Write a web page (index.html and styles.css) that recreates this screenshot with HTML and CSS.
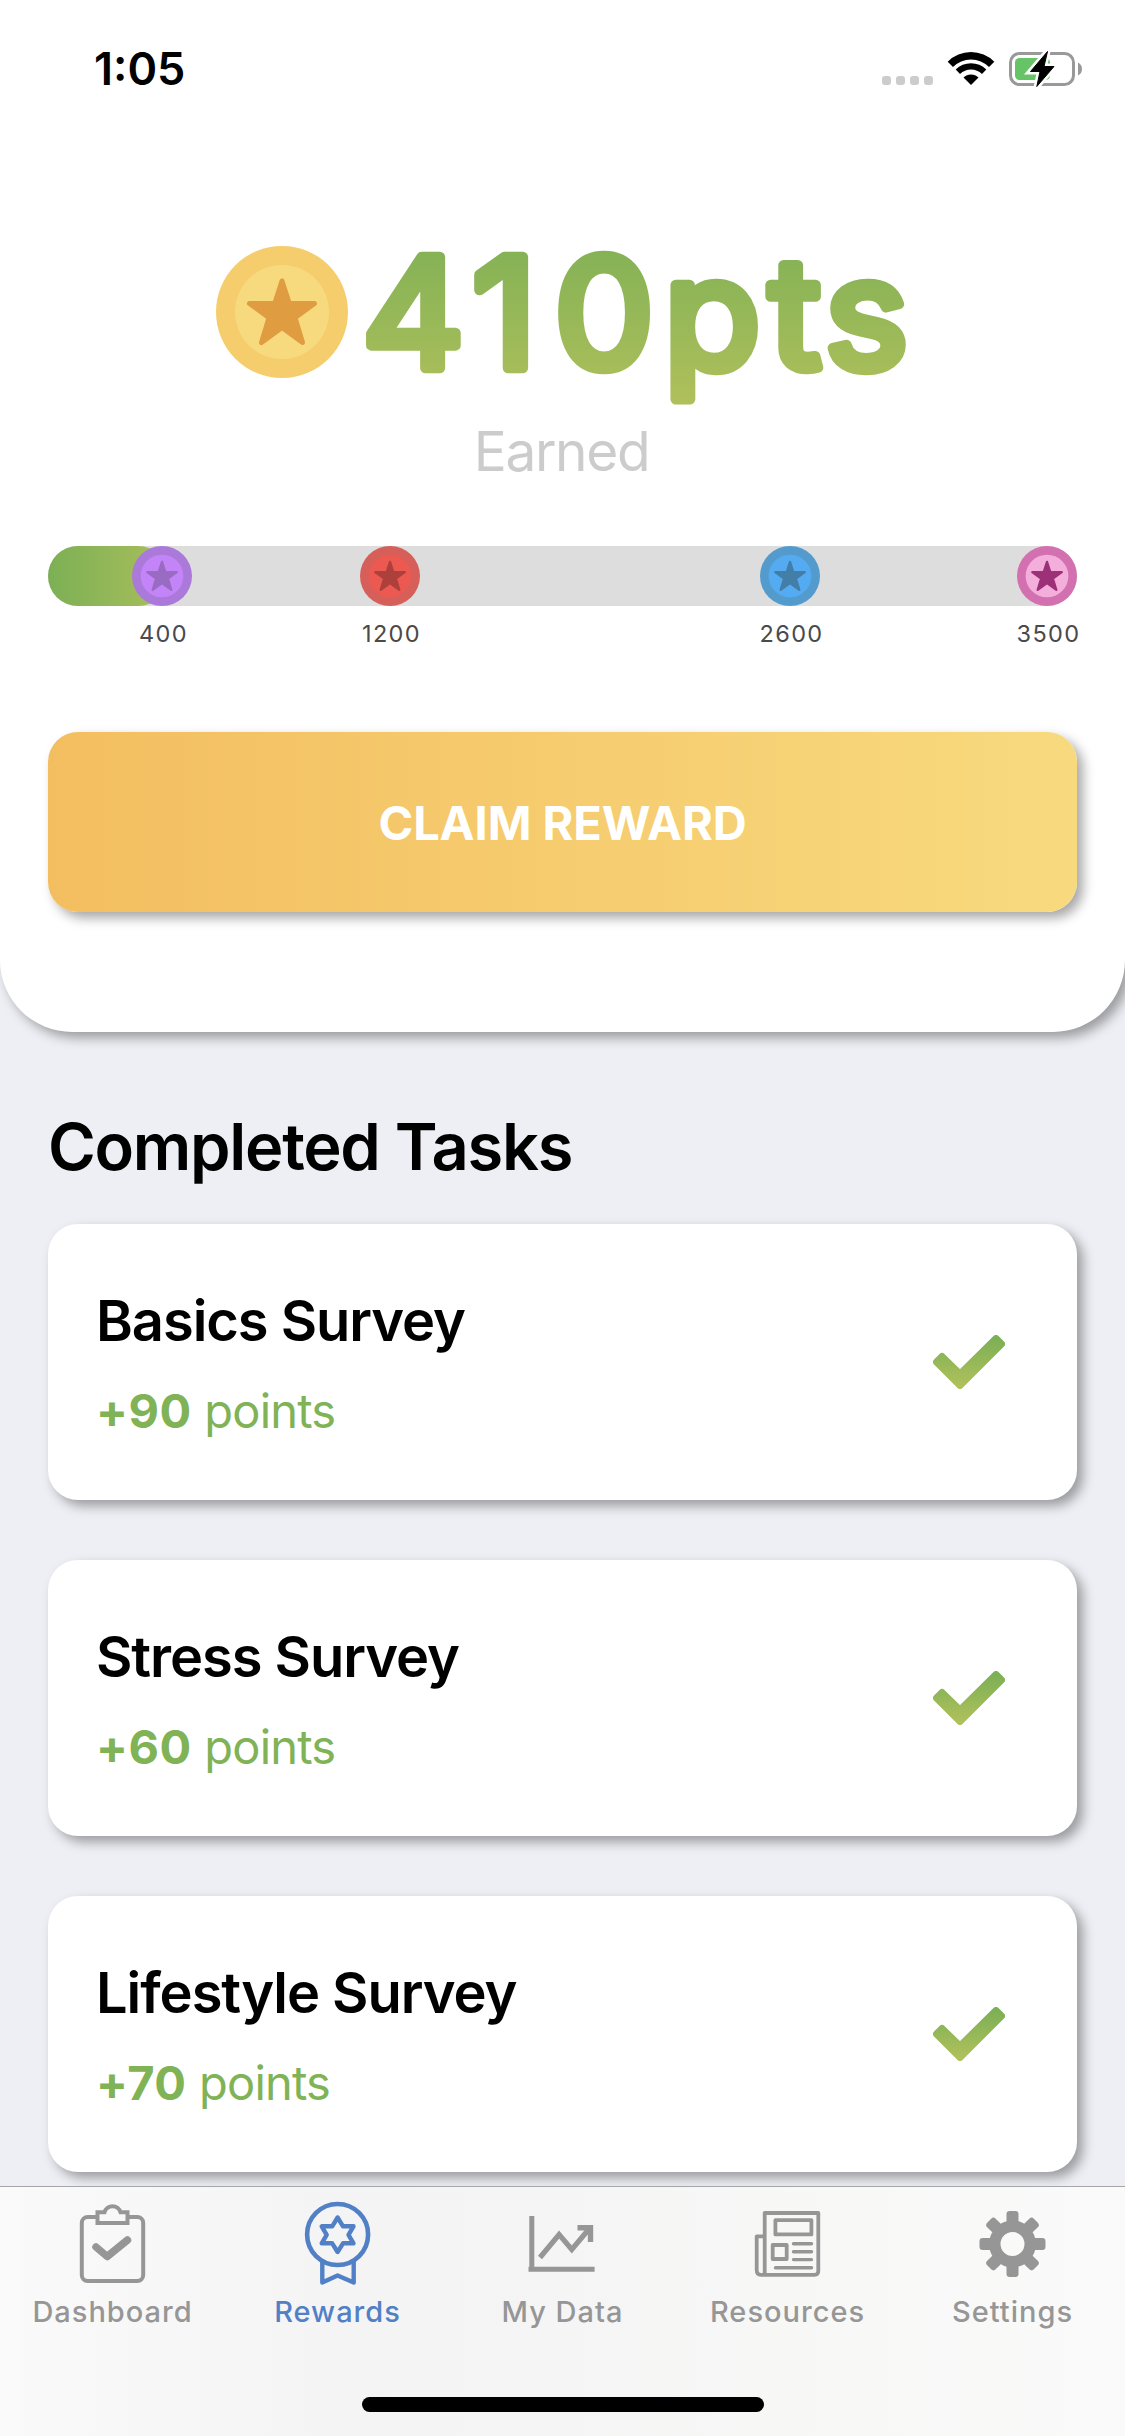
FILE: index.html
```html
<!DOCTYPE html>
<html lang="en">
<head>
<meta charset="utf-8">
<title>Rewards</title>
<link rel="stylesheet" href="styles.css">
</head>
<body>
<svg class="defs" width="0" height="0" aria-hidden="true">
  <defs>
    <linearGradient id="leaf" x1="0" y1="0" x2="0" y2="1">
      <stop offset="0" stop-color="#7cb055"/>
      <stop offset="1" stop-color="#afc05b"/>
    </linearGradient>
    <linearGradient id="leafText" gradientUnits="userSpaceOnUse" x1="0" y1="-5" x2="0" y2="158">
      <stop offset="0" stop-color="#82b155"/>
      <stop offset="1" stop-color="#afc05b"/>
    </linearGradient>
    <symbol id="coin" viewBox="0 0 132 132">
      <circle class="coin-rim" cx="66" cy="66" r="66"/>
      <circle class="coin-face" cx="66" cy="66" r="47"/>
      <path class="coin-star" d="M66 35 L73.3 57.5 H98.500 L79 71.700 L86.500 96.500 L66 81.500 L45.500 96.500 L53 71.700 L33.500 57.500 H58.700 Z"/>
    </symbol>
    <symbol id="check" viewBox="0 0 72 54">
      <path d="M9 21.500 L27 39 L63 3.500 L68.500 9 L27 50.500 L3.500 27 Z" fill="url(#leaf)" stroke="url(#leaf)" stroke-width="7" stroke-linejoin="round"/>
    </symbol>
  </defs>
</svg>

<div class="screen">
  <header class="summary">
    <div class="status">
      <span class="time">1:05</span>
      <svg class="status-icons" viewBox="0 0 210 46">
        <g fill="#ccc">
          <rect x="6" y="30" width="9" height="9" rx="3"/>
          <rect x="20" y="30" width="9" height="9" rx="3"/>
          <rect x="34" y="30" width="9" height="9" rx="3"/>
          <rect x="48" y="30" width="9" height="9" rx="3"/>
        </g>
        <g>
          <path d="M71.700 15.700 A33 33 0 0 1 118.300 15.700 L113 21 A25.500 25.500 0 0 0 77 21 Z"/>
          <path d="M79.700 23.500 A21.800 21.800 0 0 1 110.300 23.500 L106 28 A15.600 15.600 0 0 0 84 28 Z"/>
          <path d="M87.500 31.500 A10.600 10.600 0 0 1 102.500 31.500 L95 39 Z"/>
        </g>
        <rect x="134.500" y="7.500" width="63" height="31" rx="9" fill="none" stroke="#999" stroke-width="3"/>
        <path d="M202 16.500 Q206 18.500 206 23 Q206 27.500 202 29.500 Z" fill="#999"/>
        <rect x="139" y="12" width="35" height="22" rx="4.500" fill="#67c466"/>
        <path d="M171.500 5.500 L154.500 25.500 H164 L160.800 40.500 L178 20.500 H168 Z" stroke="#fff" stroke-width="6" fill="#fff"/>
        <path d="M171.500 5.500 L154.500 25.500 H164 L160.800 40.500 L178 20.500 H168 Z" stroke="#000" stroke-width="1" stroke-linejoin="round"/>
      </svg>
    </div>

    <div class="score">
      <svg class="score-coin coin-gold"><use href="#coin"/></svg>
      <svg class="score-value" viewBox="0 0 545 132">
        <text transform="scale(1.04 1)" x="1" y="121.500" dx="1.200 -1.500 4.800 -2.800 -3.500 -7" textLength="525" lengthAdjust="spacing">410pts</text>
      </svg>
    </div>
    <p class="score-caption">Earned</p>

    <div class="track">
      <div class="track-fill" style="width: 120px"></div>
      <div class="milestone" style="left: 114px"><svg class="coin-purple"><use href="#coin"/></svg><span>400</span></div>
      <div class="milestone" style="left: 342px"><svg class="coin-red"><use href="#coin"/></svg><span>1200</span></div>
      <div class="milestone" style="left: 742px"><svg class="coin-blue"><use href="#coin"/></svg><span>2600</span></div>
      <div class="milestone" style="left: 999px"><svg class="coin-pink"><use href="#coin"/></svg><span>3500</span></div>
    </div>

    <button class="claim">CLAIM REWARD</button>
  </header>

  <main class="tasks">
    <h1>Completed Tasks</h1>
    <article class="task">
      <div><h2>Basics Survey</h2><p><b>+90</b> points</p></div>
      <svg class="check"><use href="#check"/></svg>
    </article>
    <article class="task">
      <div><h2>Stress Survey</h2><p><b>+60</b> points</p></div>
      <svg class="check"><use href="#check"/></svg>
    </article>
    <article class="task">
      <div><h2>Lifestyle Survey</h2><p><b>+70</b> points</p></div>
      <svg class="check"><use href="#check"/></svg>
    </article>
  </main>

  <nav class="tabs">
    <a class="tab">
      <svg viewBox="0 0 90 96">
        <rect x="13.800" y="20" width="61.400" height="64" rx="6" stroke-width="4"/>
        <path d="M29.500 15.300 H36.500 A8.300 8.300 0 0 1 52.500 15.300 H59.500 V26 H29.500 Z" fill="#f8f8f8" stroke-width="4"/>
        <path d="M28 50 L39.200 59.500 L59.500 43" stroke-width="7.500" stroke-linecap="round" stroke-linejoin="round"/>
      </svg>
      <span>Dashboard</span>
    </a>
    <a class="tab active">
      <svg viewBox="0 0 90 96">
        <circle cx="44.600" cy="37.500" r="30.500" stroke-width="4.600"/>
        <path d="M44.600 20.500 L50 29.300 H60.500 L55.500 37.800 L60.500 46.300 H50 L44.600 55 L39.200 46.300 H28.700 L33.700 37.800 L28.700 29.300 H39.200 Z" stroke-width="4.400" stroke-linejoin="round"/>
        <path d="M29.300 64 V85.500 L44.600 78.500 L60.700 85.500 V64" stroke-width="4.400" stroke-linejoin="round"/>
      </svg>
      <span>Rewards</span>
    </a>
    <a class="tab">
      <svg viewBox="0 0 90 96">
        <path d="M13.800 19 V72.300 M10.500 72.300 H76.600" stroke-width="5"/>
        <path d="M22 60.500 L41.100 37.500 L53.800 52.500 L71 32" stroke-width="5.200"/>
        <path d="M59.500 30.700 H72.500 V45" stroke-width="5.400"/>
      </svg>
      <span>My Data</span>
    </a>
    <a class="tab">
      <svg viewBox="0 0 90 96">
        <g stroke-width="3.800" stroke-linejoin="round" stroke-linecap="round">
          <path d="M21.700 16 H75.300 V74 Q75.300 77.800 71.500 77.800 H18 Q13.700 77.800 13.700 73 V39.300 H21.700 M21.700 16 V77"/>
          <rect x="32.400" y="23.200" width="36" height="14.200"/>
          <rect x="29.700" y="48" width="14" height="14"/>
          <path stroke-width="3.400" d="M50.500 46.700 H68.500 M50.500 54.700 H68.500 M50.500 62.600 H68.500 M32.500 70.800 H68.500"/>
        </g>
      </svg>
      <span>Resources</span>
    </a>
    <a class="tab">
      <svg viewBox="0 0 90 96">
        <g transform="translate(44.500 47)">
          <circle r="17.700" stroke-width="11.400"/>
          <g fill="currentColor" stroke="none">
            <rect id="tooth" x="-6" y="-33" width="12" height="13" rx="3.200"/>
            <use href="#tooth" transform="rotate(45)"/>
            <use href="#tooth" transform="rotate(90)"/>
            <use href="#tooth" transform="rotate(135)"/>
            <use href="#tooth" transform="rotate(180)"/>
            <use href="#tooth" transform="rotate(225)"/>
            <use href="#tooth" transform="rotate(270)"/>
            <use href="#tooth" transform="rotate(315)"/>
          </g>
        </g>
      </svg>
      <span>Settings</span>
    </a>
    <div class="home-indicator"></div>
  </nav>
</div>
</body>
</html>
```
FILE: styles.css
```css
* { box-sizing: border-box; margin: 0; padding: 0; }

body {
  width: 1125px;
  height: 2436px;
  overflow: hidden;
  background: #eeeff4;
  font-family: Inter, "Liberation Sans", sans-serif;
  color: #000;
}

.defs { position: absolute; }

.screen {
  display: flex;
  flex-direction: column;
  height: 2436px;
}

.summary {
  position: relative;
  flex: none;
  height: 1032px;
  padding: 0 48px;
  background: #fff;
  border-radius: 0 0 72px 72px;
  box-shadow: 6px 6px 12px rgba(0, 0, 0, 0.35);
}

.status {
  display: flex;
  justify-content: space-between;
  height: 138px;
  margin: 0 -9px 0 0;
  padding-left: 46px;
}

.time {
  font-size: 45px;
  font-weight: 600;
  line-height: 138px;
}

.status-icons { width: 210px; height: 46px; margin-top: 46px; }

.score {
  display: flex;
  gap: 12px;
  height: 132px;
  margin-top: 108px;
  padding-left: 168px;
}

.score-coin { width: 132px; height: 132px; }

.score-value { width: 545px; height: 132px; overflow: visible; }

.score-value text {
  font-size: 152px;
  font-weight: 400;
  fill: url(#leafText);
  stroke: url(#leafText);
  stroke-width: 10.5px;
  stroke-linejoin: round;
}

.score-caption {
  margin: 40px 2px 0 0;
  color: #ccc;
  font-size: 55px;
  line-height: 66px;
  letter-spacing: -1.4px;
  text-align: center;
}

.coin-rim { fill: var(--rim); }
.coin-face { fill: var(--face); }
.coin-star { fill: var(--star); stroke: var(--star); stroke-width: 5px; stroke-linejoin: round; }
.coin-gold { --rim: #f6cd6c; --face: #f8da7e; --star: #e09c40; }
.coin-purple { --rim: #ab79d9; --face: #c384f8; --star: #996bc2; }
.coin-red { --rim: #d65f5a; --face: #eb5951; --star: #ae403c; }
.coin-blue { --rim: #549bcd; --face: #54abf1; --star: #437ea8; }
.coin-pink { --rim: #d370b0; --face: #f3aedb; --star: #9d3178; }

.track {
  position: relative;
  height: 60px;
  margin-top: 62px;
  background: #ddd;
  border-radius: 30px;
}

.track-fill {
  height: 60px;
  border-radius: 30px;
  background: linear-gradient(90deg, #7cb055, #a9be5b);
}

.milestone {
  position: absolute;
  top: 0;
  display: flex;
  flex-direction: column;
  align-items: center;
  width: 80px;
  margin-left: -40px;
  color: #4a4a4a;
  font-size: 23.5px;
  letter-spacing: 1.4px;
}

.milestone svg { width: 60px; height: 60px; }
.milestone span { margin: 12px -3px 0 0; line-height: 31px; }

.claim {
  display: block;
  width: 100%;
  height: 180px;
  margin-top: 126px;
  padding-top: 1px;
  border: 0;
  border-radius: 30px;
  background: linear-gradient(90deg, #f3be60, #f8da7e);
  box-shadow: 6px 6px 12px rgba(0, 0, 0, 0.35);
  color: #fff;
  font: 700 47px/180px Inter, sans-serif;
  letter-spacing: -0.1px;
}

.tasks {
  display: flex;
  flex-direction: column;
  gap: 60px;
  height: 1154px;
  padding: 74px 48px 0;
  overflow: hidden;
}

h1 {
  height: 58px;
  font-size: 65px;
  font-weight: 600;
  line-height: 82px;
  letter-spacing: -1.3px;
  white-space: nowrap;
}

.task {
  flex: none;
  display: flex;
  justify-content: space-between;
  align-items: center;
  height: 276px;
  padding: 0 72px 0 48px;
  background: #fff;
  border-radius: 30px;
  box-shadow: 6px 6px 12px rgba(0, 0, 0, 0.35);
}

h2 {
  padding-top: 2px;
  font-size: 56px;
  font-weight: 600;
  line-height: 70px;
  letter-spacing: -1.05px;
}

.task p {
  margin-top: 25px;
  color: #80b256;
  font-size: 47px;
  line-height: 60px;
  letter-spacing: -0.8px;
}

.task b { letter-spacing: 0.6px; }

.check { width: 72px; height: 54px; }

.tabs {
  position: relative;
  display: flex;
  height: 250px;
  border-top: 1px solid #a5a6aa;
  background: linear-gradient(90deg, #fafafa, #f4f4f4 30%, #f5f5f5 50%, #f8f8f7 75%, #fafafa);
}

.tab {
  display: flex;
  flex-direction: column;
  align-items: center;
  width: 225px;
  padding-top: 10px;
  color: #969696;
  font-size: 29px;
  font-weight: 500;
  line-height: 37px;
  letter-spacing: 1px;
}

.tab svg { width: 90px; height: 96px; fill: none; stroke: currentColor; }
.active { color: #5180c6; }

.home-indicator {
  position: absolute;
  top: 210px;
  left: 362px;
  width: 402px;
  height: 15px;
  border-radius: 8px;
  background: #000;
}
```
